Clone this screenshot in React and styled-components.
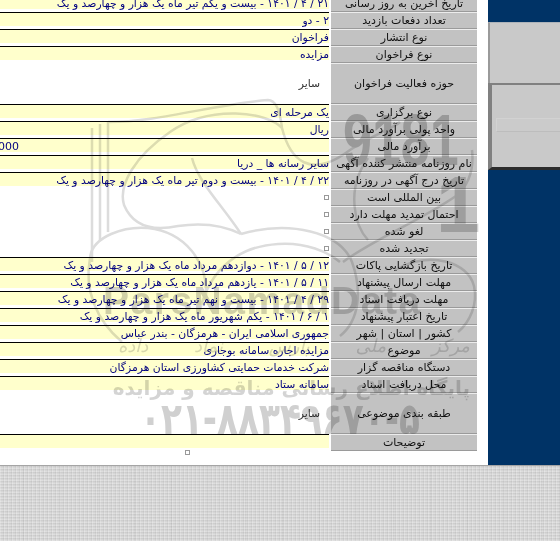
import React from 'react'
import styled, { createGlobalStyle } from 'styled-components'

const FONT = '"DejaVu Sans", "Noto Sans", sans-serif'

const rows = [
  { label: 'تاریخ آخرین به روز رسانی', value: '۲۱ / ۴ / ۱۴۰۱ - بیست و یکم تیر ماه یک هزار و چهارصد و یک' },
  { label: 'تعداد دفعات بازدید', value: '۲ - دو' },
  { label: 'نوع انتشار', value: 'فراخوان' },
  { label: 'نوع فراخوان', value: 'مزایده' },
  { label: 'حوزه فعالیت فراخوان', value: 'سایر', big: true },
  { label: 'نوع برگزاری', value: 'یک مرحله ای' },
  { label: 'واحد پولی برآورد مالی', value: 'ریال' },
  { label: 'برآورد مالی', value: '5000000000', amount: true },
  { label: 'نام روزنامه منتشر کننده آگهی', value: 'سایر رسانه ها _ دریا' },
  { label: 'تاریخ درج آگهی در روزنامه', value: '۲۲ / ۴ / ۱۴۰۱ - بیست و دوم تیر ماه یک هزار و چهارصد و یک' },
  { label: 'بین المللی است', check: true },
  { label: 'احتمال تمدید مهلت دارد', check: true },
  { label: 'لغو شده', check: true },
  { label: 'تجدید شده', check: true },
  { label: 'تاریخ بازگشایی پاکات', value: '۱۲ / ۵ / ۱۴۰۱ - دوازدهم مرداد ماه یک هزار و چهارصد و یک' },
  { label: 'مهلت ارسال پیشنهاد', value: '۱۱ / ۵ / ۱۴۰۱ - یازدهم مرداد ماه یک هزار و چهارصد و یک' },
  { label: 'مهلت دریافت اسناد', value: '۲۹ / ۴ / ۱۴۰۱ - بیست و نهم تیر ماه یک هزار و چهارصد و یک' },
  { label: 'تاریخ اعتبار پیشنهاد', value: '۱ / ۶ / ۱۴۰۱ - یکم شهریور ماه یک هزار و چهارصد و یک' },
  { label: 'کشور | استان | شهر', value: 'جمهوری اسلامی ایران - هرمزگان - بندر عباس' },
  { label: 'موضوع', value: 'مزایده اجاره سامانه بوجاری' },
  { label: 'دستگاه مناقصه گزار', value: 'شرکت خدمات حمایتی کشاورزی استان هرمزگان' },
  { label: 'محل دریافت اسناد', value: 'سامانه ستاد' },
  { label: 'طبقه بندی موضوعی', value: 'سایر', big: true },
  { label: 'توضیحات', value: '' },
]

function Emblem() {
  return (
    <EmblemSvg viewBox="0 0 488 465" fill="none">
      <path d="M92 128V262M100 124V240M108 122V232" />
      <path d="M108 122C160 122 215 104 268 100C276 100 280 110 282 128" />
      <path d="M282 128C268 112 210 104 170 132C135 156 118 185 124 205C132 224 150 232 178 226C205 222 225 226 241 234" />
      <path d="M282 128C290 160 310 180 350 150C372 135 394 128 400 122" />
      <path d="M241 234C222 205 198 182 192 158" />
      <path d="M241 234C290 220 340 232 352 262C362 290 360 320 340 336" />
      <path d="M90 258C92 236 125 226 148 228C185 232 208 262 206 296" />
      <path d="M90 258C84 290 96 320 122 342" />
      <path d="M200 310C210 268 240 246 278 244C306 242 328 252 340 262" />
      <path d="M343 262C372 240 418 222 456 196C470 184 474 168 472 150" />
      <path d="M395 270C430 250 468 262 474 286C478 304 470 322 458 332" />
      <path d="M368 158C345 190 355 226 368 240" />
    </EmblemSvg>
  )
}

export default function App() {
  return (
    <Page>
      <GlobalStyle />
      <Main>
        <Content>
          <Table>
            {rows.map((row) => (
              <Row key={row.label} $big={row.big}>
                <ValueCell $plain={row.big || row.check}>
                  {row.check ? (
                    <Check />
                  ) : (
                    <ValueBand $big={row.big} $amount={row.amount}>{row.value}</ValueBand>
                  )}
                </ValueCell>
                <LabelCell>{row.label}</LabelCell>
              </Row>
            ))}
          </Table>
          <Footnote>
            <Check />
          </Footnote>
          <Watermark aria-hidden="true">
            <Emblem />
            <BigNumber>9181</BigNumber>
            <TallOne>1</TallOne>
            <Brand>ParsNamadData</Brand>
            <ScriptLine>مرکز ملی پارس نماد داده</ScriptLine>
            <Slogan>پایگاه اطلاع رسانی مناقصه و مزایده</Slogan>
            <Phone>۰۲۱-۸۸۳۴۹۶۷۰-۵</Phone>
          </Watermark>
        </Content>
        <Sidebar>
          <SideTop />
          <SidePanel>
            <SideInput />
          </SidePanel>
        </Sidebar>
      </Main>
      <Texture />
    </Page>
  )
}

const GlobalStyle = createGlobalStyle`
  html, body {
    margin: 0;
    padding: 0;
    background: #d6d6d6;
  }
`

const Page = styled.div`
  width: 560px;
  height: 541px;
  overflow: hidden;
  display: flex;
  flex-direction: column;
  font-family: ${FONT};
`

const Main = styled.div`
  height: 465px;
  display: flex;
  flex-shrink: 0;
`

const Content = styled.div`
  position: relative;
  width: 488px;
  background: #fff;
  overflow: hidden;
`

const Table = styled.div`
  margin-top: -5px;
  display: flex;
  flex-direction: column;
`

const Row = styled.div`
  display: grid;
  grid-template-columns: 329px 146px;
  column-gap: 2px;
  height: ${(p) => (p.$big ? '41px' : '17px')};
`

const ValueCell = styled.div`
  border-top: 1px solid ${(p) => (p.$plain ? 'transparent' : '#000')};
  direction: rtl;
  min-width: 0;
  overflow: hidden;
  position: relative;
`

const ValueBand = styled.div`
  height: ${(p) => (p.$big ? '40px' : '13px')};
  line-height: ${(p) => (p.$big ? '40px' : '15px')};
  background: ${(p) => (p.$big ? '#fff' : '#ffffcc')};
  color: ${(p) => (p.$big ? '#333' : '#000080')};
  font-size: ${(p) => (p.$amount ? '11px' : '10.8px')};
  white-space: nowrap;
  direction: ${(p) => (p.$amount ? 'ltr' : 'rtl')};
  text-align: ${(p) => (p.$amount ? 'left' : 'right')};
  margin-left: ${(p) => (p.$amount ? '-51px' : '0')};
  padding-right: ${(p) => (p.$big ? '9px' : '0')};
`

const LabelCell = styled.div`
  background: #c2c2c2;
  border-top: 1px solid #ececec;
  border-bottom: 1px solid #9a9a9a;
  display: flex;
  align-items: center;
  justify-content: center;
  direction: rtl;
  font-size: 11px;
  color: #111;
  white-space: nowrap;
  box-sizing: border-box;
`

const Check = styled.span`
  display: block;
  width: 3px;
  height: 3px;
  margin: 5px 0 0 0;
  border: 1px solid #999;
  background: #fff;
`

const Footnote = styled.div`
  display: flex;
  margin-top: -6px;
  padding: 0 0 0 185px;
`

const Watermark = styled.div`
  position: absolute;
  inset: 0;
  mix-blend-mode: multiply;
  pointer-events: none;
  white-space: nowrap;
`

const EmblemSvg = styled.svg`
  position: absolute;
  inset: 0;
  width: 488px;
  height: 465px;
  stroke: #dcdcdc;
  stroke-width: 2.5;
`

const BigNumber = styled.div`
  position: absolute;
  left: 343px;
  top: 98px;
  font: bold 52px/60px "Liberation Sans", sans-serif;
  transform: scaleY(1.4);
  transform-origin: top left;
  color: #c9c9c9;
`

const TallOne = styled.div`
  position: absolute;
  left: 436px;
  top: 160px;
  font: bold 80px/90px "Liberation Sans", sans-serif;
  color: #d0d0d0;
`

const Brand = styled.div`
  position: absolute;
  left: 103px;
  top: 278px;
  font: bold 39px/46px "Liberation Sans", sans-serif;
  letter-spacing: 1.5px;
  color: #d0d0d0;
`

const ScriptLine = styled.div`
  position: absolute;
  left: 108px;
  top: 333px;
  width: 362px;
  direction: rtl;
  font: italic 18px/26px ${FONT};
  word-spacing: 40px;
  color: #d8d8d8;
`

const Slogan = styled.div`
  position: absolute;
  left: 100px;
  top: 373px;
  width: 370px;
  direction: rtl;
  font: bold 20px/30px ${FONT};
  color: #d4d4d4;
`

const Phone = styled.div`
  position: absolute;
  left: 140px;
  top: 389px;
  direction: ltr;
  font: bold 44px/60px ${FONT};
  letter-spacing: -4px;
  transform: scaleX(0.78);
  transform-origin: top left;
  color: #d0d0d0;
`

const Sidebar = styled.div`
  width: 72px;
  background: #003366;
  padding-top: 22px;
  box-sizing: border-box;
  display: flex;
  flex-direction: column;
`

const SideTop = styled.div`
  height: 60px;
  background: #c9c9c9;
  border-top: 1px solid #aeb4ba;
  border-left: 2px solid #9a9a9a;
`

const SidePanel = styled.div`
  height: 87px;
  box-sizing: border-box;
  background: #c9c9c9;
  border-top: 2px solid #808080;
  border-left: 4px solid #808080;
  border-bottom: 3px solid #2c2c2c;
  padding: 33px 0 0 4px;
`

const SideInput = styled.div`
  height: 12px;
  border: 1px solid #d2d2d2;
  border-right: 0;
  border-bottom-color: #bdbdbd;
  background: #cbcbcb;
`

const Texture = styled.div`
  flex: 1;
  border-top: 1px solid #a5a5a5;
  background-color: #d6d6d6;
  background-image:
    repeating-linear-gradient(90deg, rgba(255,255,255,.2) 0 1px, transparent 1px 3px, rgba(0,0,0,.04) 3px 4px),
    repeating-linear-gradient(0deg, rgba(255,255,255,.2) 0 1px, transparent 1px 2px, rgba(0,0,0,.04) 2px 3px),
    repeating-linear-gradient(90deg, transparent 0 23px, rgba(0,0,0,.03) 23px 24px, transparent 24px 37px);
`
